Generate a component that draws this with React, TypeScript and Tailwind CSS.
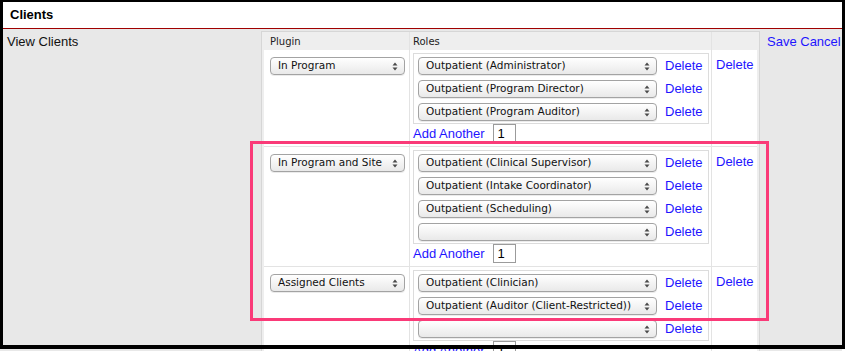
import React from "react";

type Group = {
  plugin: string;
  roles: string[];
};

const groups: Group[] = [
  {
    plugin: "In Program",
    roles: ["Outpatient (Administrator)", "Outpatient (Program Director)", "Outpatient (Program Auditor)"],
  },
  {
    plugin: "In Program and Site",
    roles: [
      "Outpatient (Clinical Supervisor)",
      "Outpatient (Intake Coordinator)",
      "Outpatient (Scheduling)",
      "",
    ],
  },
  {
    plugin: "Assigned Clients",
    roles: ["Outpatient (Clinician)", "Outpatient (Auditor (Client-Restricted))", ""],
  },
];

function Arrows() {
  return (
    <svg width="6" height="9" viewBox="0 0 6 9" className="shrink-0">
      <path d="M3 0.5 L5.5 3.5 L0.5 3.5 Z" fill="#4a4a4a" />
      <path d="M3 8.5 L5.5 5.5 L0.5 5.5 Z" fill="#4a4a4a" />
    </svg>
  );
}

function Select({ value, width }: { value: string; width: string }) {
  return (
    <div
      className={`${width} h-[18px] flex items-center justify-between pl-[7px] pr-[6px] rounded-[4px] border border-[#a3a3a3] bg-gradient-to-b from-white to-[#e9e9e9] shadow-[0_1px_0_rgba(0,0,0,0.08)] text-[10.5px] text-[#111] font-['DejaVu_Sans',sans-serif] whitespace-nowrap overflow-hidden`}
    >
      <span>{value}</span>
      <Arrows />
    </div>
  );
}

function DeleteLink() {
  return <div className="text-[13px] leading-[18px] text-[#1e14ff]">Delete</div>;
}

function GroupRow({ group }: { group: Group }) {
  return (
    <div className="flex bg-white border-b border-[#e3e3e3]">
      {/* Plugin */}
      <div className="w-[146px] border-r border-[#e3e3e3] pl-[6px] pt-[7px]">
        <Select value={group.plugin} width="w-[135px]" />
      </div>

      {/* Roles */}
      <div className="w-[302px] border-r border-[#e3e3e3] pl-[3px] pt-[3px] pb-[3px]">
        <div className="w-[296px] border border-[#dcdcdc] pl-[4px] pt-[3px] pb-[2px] flex flex-col gap-[5px]">
          {group.roles.map((role, i) => (
            <div key={i} className="flex items-center gap-[8px]">
              <Select value={role} width="w-[239px]" />
              <DeleteLink />
            </div>
          ))}
        </div>
        <div className="flex items-center h-[19px] gap-[8px]">
          <span className="text-[13px] text-[#1e14ff]">Add Another</span>
          <div className="w-[23px] h-[19px] border border-[#9b9b9b] bg-white text-[13px] leading-[17px] pl-[4px] text-black">
            1
          </div>
        </div>
      </div>

      {/* Group delete */}
      <div className="w-[45px] pl-[4px] pt-[6px]">
        <DeleteLink />
      </div>
    </div>
  );
}

export default function App() {
  return (
    <div className="relative w-[847px] h-[351px] overflow-hidden bg-white font-['Liberation_Sans',Arial,sans-serif]">
      <div className="pt-[2px] w-[842px]">
        {/* Title bar */}
        <div className="h-[27px] border-b border-[#a00000] pl-[10px] flex items-center bg-white">
          <span className="text-[13px] font-bold text-black">Clients</span>
        </div>

        {/* Body */}
        <div className="flex bg-[#e8e8e8] min-h-[330px]">
          <div className="w-[261px] pl-[7px] pt-[5px] text-[13px] leading-[16px] text-[#111]">View Clients</div>

          <div className="mt-[2px] w-[499px] border-l border-r border-t border-[#d6d6d6] bg-[#eeeeee] px-[2px] self-start">
            <div className="flex h-[18px] items-center text-[10px] text-[#222] font-['DejaVu_Sans',sans-serif]">
              <div className="w-[146px] pl-[6px] h-full flex items-center border-r border-[#e3e3e3]">Plugin</div>
              <div className="w-[302px] pl-[3px] h-full flex items-center border-r border-[#e3e3e3]">Roles</div>
              <div className="w-[45px]" />
            </div>
            {groups.map((g, i) => (
              <GroupRow key={i} group={g} />
            ))}
          </div>

          <div className="pl-[7px] pt-[5px] text-[13px] leading-[16px] text-[#1e14ff] whitespace-nowrap">
            Save Cancel
          </div>
        </div>
      </div>

      {/* Annotation highlight */}
      <div className="absolute left-[250px] top-[141px] w-[519px] h-[180px] border-[3px] border-[#fa3a78]" />

      {/* Screenshot frame */}
      <div className="absolute left-0 top-0 w-[845px] h-[2px] bg-black" />
      <div className="absolute left-0 top-0 w-[3px] h-[349px] bg-black" />
      <div className="absolute left-[842px] top-0 w-[3px] h-[349px] bg-black" />
      <div className="absolute left-0 top-[345px] w-[845px] h-[4px] bg-black" />
    </div>
  );
}
